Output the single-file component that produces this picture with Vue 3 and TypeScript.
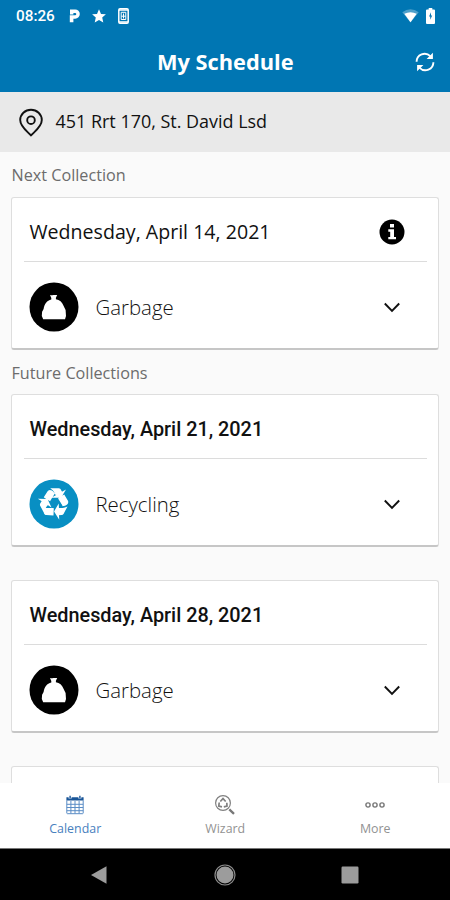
<script setup lang="ts">
interface Collection {
  date: string
  kind: 'Garbage' | 'Recycling' | ''
  next: boolean
}

interface Section {
  title: string
  items: Collection[]
}

const sections: Section[] = [
  { title: 'Next Collection', items: [{ date: 'Wednesday, April 14, 2021', kind: 'Garbage', next: true }] },
  {
    title: 'Future Collections',
    items: [
      { date: 'Wednesday, April 21, 2021', kind: 'Recycling', next: false },
      { date: 'Wednesday, April 28, 2021', kind: 'Garbage', next: false },
      { date: '', kind: '', next: false },
    ],
  },
]
</script>

<template>
  <div class="phone">
    <div class="status">
      <span class="clock">08:26</span>
      <svg class="s-park" width="12" height="14" viewBox="0 0 12 14">
        <path d="M1 .5h5.200a4.500 4.500 0 0 1 0 9.200H4.400V13.300H.8V6.300h5.300a1.200 1.200 0 0 0 0-2.400H4.400v1.500H1z" fill="#fff" />
      </svg>
      <svg class="s-star" width="14" height="14" viewBox="0 0 14 14">
        <path d="M7 .3l2 4.600 4.900.4-3.700 3.300 1.100 4.900L7 10.900l-4.300 2.600 1.100-4.900L.1 5.300 5 4.900z" fill="#fff" />
      </svg>
      <svg class="s-device" width="11" height="16" viewBox="0 0 11 16">
        <rect x=".8" y=".8" width="9.400" height="14.400" rx="1.200" fill="none" stroke="#fff" stroke-width="1.500" />
        <path d="M1 2h9M1 14h9" stroke="#fff" stroke-width="1.600" />
        <path d="M3.200 4.300h4.600v7.200H3.200zM5.500 5.500v5M3.300 8.200h4.400" fill="none" stroke="#fff" stroke-width="1" />
      </svg>
      <span class="grow"></span>
      <svg class="s-wifi" width="17" height="14" viewBox="0 0 17 14">
        <path d="M.3 3.300Q8.500-2.700 16.700 3.300L8.500 13.500z" fill="#fff" opacity=".3" />
        <path d="M2.300 4.800Q8.500 1.800 14.700 4.800L8.500 13.300z" fill="#fff" />
      </svg>
      <svg class="s-battery" width="9" height="16" viewBox="0 0 9 16">
        <path d="M2.700 0h3.600v1.500H8q1 0 1 1V15q0 1-1 1H1q-1 0-1-1V2.500q0-1 1-1h1.700z" fill="#fff" />
        <path d="M5 4.300L3 8.600h1.200v3.100l2-4.300H5z" fill="#0876b3" />
      </svg>
    </div>

    <header class="header">
      <h1>My Schedule</h1>
      <svg class="refresh" width="20" height="20" viewBox="0 0 20 20">
        <path d="M1.600 9.800A8 8 0 0 1 15.300 4.200M18.400 10.200A8 8 0 0 1 4.700 15.800" fill="none" stroke="#fff" stroke-width="1.900" />
        <path d="M17.900.8v6.300h-6.300zM2.100 19.200v-6.300h6.300z" fill="#fff" />
      </svg>
    </header>

    <div class="address">
      <svg width="26" height="30" viewBox="0 0 26 30">
        <path d="M13 28.500C10.500 25.300 2.200 20 2.200 13a10.800 10.300 0 0 1 21.600 0C23.800 20 15.500 25.300 13 28.500z" fill="none" stroke="#111" stroke-width="1.900" stroke-linejoin="round" />
        <circle cx="13" cy="13.200" r="3.800" fill="none" stroke="#111" stroke-width="1.900" />
      </svg>
      <span>451 Rrt 170, St. David Lsd</span>
    </div>

    <main class="list">
      <section v-for="section in sections" :key="section.title">
        <h2>{{ section.title }}</h2>
        <div class="cards">
          <article v-for="item in section.items" :key="item.date" class="card">
            <template v-if="item.kind">
              <div class="card-head">
                <span :class="['date', { next: item.next }]">{{ item.date }}</span>
                <svg v-if="item.next" class="info" width="26" height="26" viewBox="0 0 26 26">
                  <circle cx="13" cy="13" r="12.500" fill="#000" />
                  <path d="M11 5h4v3.400h-4zM9.300 10.300H15v7.600h2v2.400H9.300v-2.400h1.900v-5.100H9.300z" fill="#fff" />
                </svg>
              </div>
              <div class="card-body">
                <svg v-if="item.kind === 'Garbage'" class="badge" width="50" height="50" viewBox="0 0 50 50">
                  <circle cx="25" cy="25" r="24.500" fill="#000" />
                  <path d="M21 12.900q1.700.5 3.500.2 2-.4 3.700 0l-1.300 2.600v1.600c3.700.7 6.300 2.700 7.500 6.300l2.200 4.500.4 5.800-1 3.300H14.200l-1.400-3.100.3-4.300 1.500-2.700c.8-5.200 3.400-8.600 7.700-9.500v-1.700z" fill="#fff" />
                </svg>
                <svg v-else class="badge" width="50" height="50" viewBox="0 0 50 50">
                  <circle cx="25" cy="25" r="24.500" fill="#088fc3" />
                  <path transform="translate(11.200 11.800) scale(.0154)" fill="#fff" stroke="#fff" stroke-width="90" d="M836 1169l-15 368-2 22-420-29q-36-3-67-31.500t-47-65.500q-11-27-14.500-55t4-65 12-55 21.500-64 19-53q78 12 509 28zM449 583l180 379-147-92q-63 72-111.500 144.500t-72.500 125-39.500 94.500-18.500 63l-4 21-190-357q-17-26-18-56t6-47l8-18q35-63 114-188l-140-86zM1680 1100l-188 359q-12 29-36.500 46.500t-43.500 20.500l-18 4q-71 7-219 12l8 164-230-367 211-362 7 173q170 16 283 5t170-33zM895 176q-47 63-265 435l-317-187-19-12 225-356q20-31 60-45t80-10q24 2 48.500 12t42 21 41.500 33 36 34.500 36 39.500 32 35zM1550 307l212 363q18 37 12.500 76t-27.500 74q-13 20-33 37t-38 28-48.500 22-47 16-51.500 14-46 12q-34-72-265-436l313-195zM1407 123l142-83-220 373-419-20 151-86q-34-89-75-166t-75.500-123.500-64.500-80-47-46.500l-17-13 405 1q31-3 58 10.500t39 28.500l11 15q39 61 112 190z" />
                </svg>
                <span class="kind">{{ item.kind }}</span>
                <svg class="chevron" width="18" height="12" viewBox="0 0 18 12">
                  <path d="M1.800 2.500L9 10 16.200 2.500" fill="none" stroke="#111" stroke-width="1.900" />
                </svg>
              </div>
            </template>
          </article>
        </div>
      </section>
    </main>

    <nav class="tabs">
      <div class="tab active">
        <svg width="18" height="20" viewBox="0 0 18 20">
          <path d="M.8 5.500V18q0 .7.700.7h15q.7 0 .7-.7V5.500M.8 9.300h16.400M.8 12.500h16.400M.8 15.700h16.400M4.900 6v12.500M9 6v12.500M13.100 6v12.500" fill="none" stroke="#5b8dc6" stroke-width="1" />
          <path d="M.4 2.300h2.200v1.200h3V2.300h6.800v1.200h3V2.300h2.200v3.200H.4z" fill="#195598" />
          <path d="M4.100.8v2.500M13.900.8v2.500" stroke="#195598" stroke-width="1.400" />
        </svg>
        <span>Calendar</span>
      </div>
      <div class="tab">
        <svg width="22" height="22" viewBox="0 0 22 22">
          <circle cx="9" cy="9" r="7.400" fill="none" stroke="#808080" stroke-width="1.200" />
          <path d="M6.300 7.500L9 4.600l2.700 2.900M12.800 8.800l.2 3.300-3.200.8M8 12.900l-3.200-.8.400-3.600" fill="none" stroke="#808080" stroke-width="1.700" />
          <path d="M15.300 15.300l4.700 4.500" stroke="#777" stroke-width="2.300" />
        </svg>
        <span>Wizard</span>
      </div>
      <div class="tab">
        <svg width="20" height="20" viewBox="0 0 20 20">
          <g fill="none" stroke="#777" stroke-width="1.400">
            <circle cx="3" cy="10" r="2.100" />
            <circle cx="10" cy="10" r="2.100" />
            <circle cx="17" cy="10" r="2.100" />
          </g>
        </svg>
        <span>More</span>
      </div>
    </nav>

    <footer class="system">
      <svg width="20" height="20" viewBox="0 0 20 20">
        <path d="M2 10L17.500 1.200v17.600z" fill="#9c9c9c" />
      </svg>
      <svg width="22" height="22" viewBox="0 0 22 22">
        <circle cx="11" cy="11" r="10" fill="none" stroke="#8c8c8c" stroke-width="1.200" />
        <circle cx="11" cy="11" r="8.500" fill="#9c9c9c" />
      </svg>
      <svg width="18" height="18" viewBox="0 0 18 18">
        <rect x=".5" y=".5" width="17" height="17" rx="1.200" fill="#9c9c9c" />
      </svg>
    </footer>
  </div>
</template>

<style>
body {
  margin: 0;
}
</style>

<style scoped>
.phone {
  width: 450px;
  height: 900px;
  display: flex;
  flex-direction: column;
  overflow: hidden;
  background: #fafafa;
  font-family: 'Open Sans', 'Noto Sans', sans-serif;
  color: #111;
}
svg {
  display: block;
  flex: none;
}
.status {
  height: 32px;
  flex: none;
  display: flex;
  align-items: center;
  padding: 0 15px 0 16px;
  background: #0076b3;
}
.clock {
  width: 53px;
  font: 500 15.300px/32px Roboto, sans-serif;
  color: #fff;
}
.s-star {
  margin-left: 11px;
}
.s-device {
  margin-left: 12px;
}
.grow {
  flex: 1;
}
.s-battery {
  margin-left: 7px;
}
.header {
  height: 60px;
  flex: none;
  display: flex;
  align-items: center;
  justify-content: flex-end;
  padding-right: 15.500px;
  background: #0076b3;
}
h1 {
  flex: 1;
  margin: 0;
  padding-left: 36px;
  text-align: center;
  font-size: 21.800px;
  line-height: 60px;
  font-weight: 700;
  color: #fff;
}
.address {
  height: 60px;
  flex: none;
  display: flex;
  align-items: center;
  gap: 11.500px;
  padding-left: 18px;
  background: #e9e9e9;
  font-size: 17.950px;
}
.address span {
  padding-bottom: 2px;
}
.list {
  flex: 1;
  min-height: 0;
  overflow: hidden;
  padding: 0 11px;
}
h2 {
  margin: 0;
  height: 45px;
  padding-left: 0.500px;
  font-size: 16.200px;
  line-height: 47px;
  font-weight: 400;
  color: #6c6c6c;
}
section + section h2 {
  height: 44px;
  line-height: 46px;
}
.cards {
  display: flex;
  flex-direction: column;
  gap: 33px;
}
.card {
  box-sizing: border-box;
  height: 153px;
  border: 1px solid #dedede;
  border-bottom: 2px solid #c6c6c6;
  border-radius: 3px;
  background: #fff;
  padding: 0 11px 0 12px;
}
.card-head {
  height: 64px;
  display: flex;
  align-items: center;
  justify-content: space-between;
  padding: 4px 22px 0 5.500px;
  box-sizing: border-box;
  border-bottom: 1px solid #dcdcdc;
}
.date {
  padding-top: 2px;
  font: 500 19.850px/24px Roboto, sans-serif;
}
.date.next {
  padding-top: 0;
  font: 400 19.600px/24px 'Open Sans', sans-serif;
}
.card-body {
  height: 89px;
  display: flex;
  align-items: center;
  padding: 0 26.500px 0 5px;
}
.kind {
  flex: 1;
  padding-left: 16.500px;
  font-size: 20.400px;
  font-weight: 300;
  color: #111;
}
.tabs {
  height: 66px;
  flex: none;
  display: grid;
  grid-template-columns: repeat(3, 1fr);
  background: #fff;
}
.tab {
  display: flex;
  flex-direction: column;
  align-items: center;
  padding: 11px 0 0 0.500px;
  font: 400 12.400px/18px 'Open Sans', sans-serif;
  color: #929292;
}
.tab svg {
  height: 22px;
}
.tab span {
  margin-top: 4px;
}
.tab.active {
  color: #4880be;
}
.system {
  height: 52px;
  margin-top: -1px;
  flex: none;
  display: flex;
  align-items: center;
  justify-content: space-between;
  box-sizing: border-box;
  padding: 0 91px 0 89px;
  border-top: 1px solid #777;
  background: #000;
}
</style>
